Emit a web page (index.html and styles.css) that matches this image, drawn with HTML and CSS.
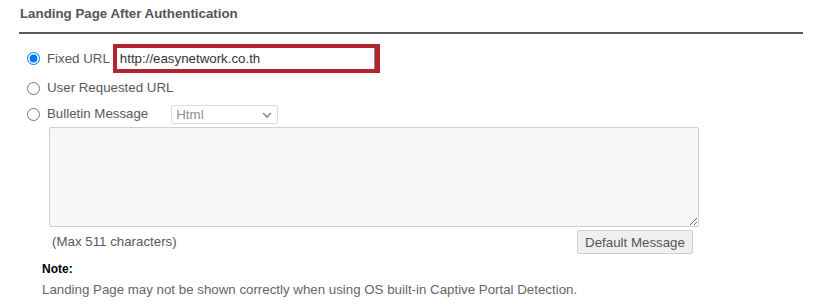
FILE: index.html
```html
<!DOCTYPE html>
<html lang="en">
<head>
  <meta charset="UTF-8">
  <meta name="viewport" content="width=device-width, initial-scale=1.0">
  <title>Landing Page After Authentication</title>
  <link rel="stylesheet" href="styles.css">
</head>
<body>
  <div class="section">
    <h2 class="section-title">Landing Page After Authentication</h2>

    <div class="options">
      <div class="option option-first">
        <input type="radio" name="landing" id="fixed" checked>
        <label for="fixed">Fixed URL</label>
        <input type="text" class="url-input" value="http://easynetwork.co.th">
      </div>
      <div class="option option-second">
        <input type="radio" name="landing" id="requested">
        <label for="requested">User Requested URL</label>
      </div>
      <div class="option option-third">
        <input type="radio" name="landing" id="bulletin">
        <label for="bulletin">Bulletin Message</label>
        <span class="select-wrap">
          <select class="format-select">
            <option>Html</option>
          </select>
          <svg class="chevron" width="10" height="6" viewBox="0 0 10 6">
            <path d="M1 1 L5 5 L9 1" fill="none" stroke="#8a8a8a" stroke-width="1.6"/>
          </svg>
        </span>
      </div>

      <textarea class="message" disabled></textarea>
      <div class="message-footer">
        <span class="hint">(Max 511 characters)</span>
        <button class="default-btn">Default Message</button>
      </div>
    </div>

    <div class="note">
      <div class="note-title">Note:</div>
      <div class="note-text">Landing Page may not be shown correctly when using OS built-in Captive Portal Detection.</div>
    </div>
  </div>
</body>
</html>
```

FILE: styles.css
```css
body {
  margin: 0;
  font-family: "Liberation Sans", Arial, sans-serif;
  font-size: 13.3px;
  color: #595959;
  background-color: #fff;
}

.section {
  margin: 0 16px 0 19px;
}

.section-title {
  margin: 0;
  padding: 6px 0 10px 1px;
  font-size: 13.3px;
  line-height: 16px;
  font-weight: bold;
  color: #555;
  border-bottom: 2px solid #5a5a5a;
}

.options {
  padding-left: 8px;
  margin-top: 10px;
}

.option {
  display: flex;
  align-items: center;
}

.option input[type="radio"] {
  width: 13px;
  height: 13px;
  margin: 0 7px 0 0;
}

.option label {
  line-height: 16px;
}

.option-first {
  height: 29px;
}

.option-second {
  height: 24px;
  margin-top: 3px;
}

.option-third {
  height: 24px;
  margin-top: 2px;
}

.url-input {
  box-sizing: border-box;
  width: 267px;
  height: 29px;
  margin-left: 3px;
  padding: 0 0 0 3px;
  border: 4px solid #b3242f;
  border-right-width: 5px;
  box-shadow: inset -1px 0 0 #8a8a8a;
  font-family: "Liberation Sans", Arial, sans-serif;
  font-size: 13.3px;
  color: #333;
  outline: none;
}

.select-wrap {
  position: relative;
  display: inline-block;
  margin-left: 23px;
}

.format-select {
  box-sizing: border-box;
  width: 107px;
  height: 19px;
  padding: 0 0 0 4px;
  border: 1px solid #ddd;
  border-radius: 2px;
  background-color: #fff;
  font-family: "Liberation Sans", Arial, sans-serif;
  font-size: 13.3px;
  color: #909090;
  appearance: none;
  -webkit-appearance: none;
}

.chevron {
  position: absolute;
  right: 6px;
  top: 7px;
}

.message {
  display: block;
  box-sizing: border-box;
  width: 650px;
  height: 100px;
  margin: 1px 0 0 22px;
  border: 1px solid #d0d0d0;
  border-radius: 2px;
  background-color: #f7f7f7;
}

.message-footer {
  box-sizing: border-box;
  width: 650px;
  margin: 3px 0 0 22px;
  padding: 0 6px 0 3px;
  display: flex;
  justify-content: space-between;
  align-items: center;
}

.hint {
  line-height: 16px;
  color: #595959;
}

.default-btn {
  box-sizing: border-box;
  width: 116px;
  height: 24px;
  padding: 0;
  border: 1px solid #cfcfcf;
  border-radius: 2px;
  background-color: #efefef;
  font-family: "Liberation Sans", Arial, sans-serif;
  font-size: 13.3px;
  color: #555;
}

.note {
  padding-left: 23px;
  margin-top: 7px;
}

.note-title {
  font-weight: bold;
  font-size: 12px;
  line-height: 16px;
  color: #000;
}

.note-text {
  margin-top: 5px;
  font-size: 13.3px;
  line-height: 16px;
  color: #666;
}
```
